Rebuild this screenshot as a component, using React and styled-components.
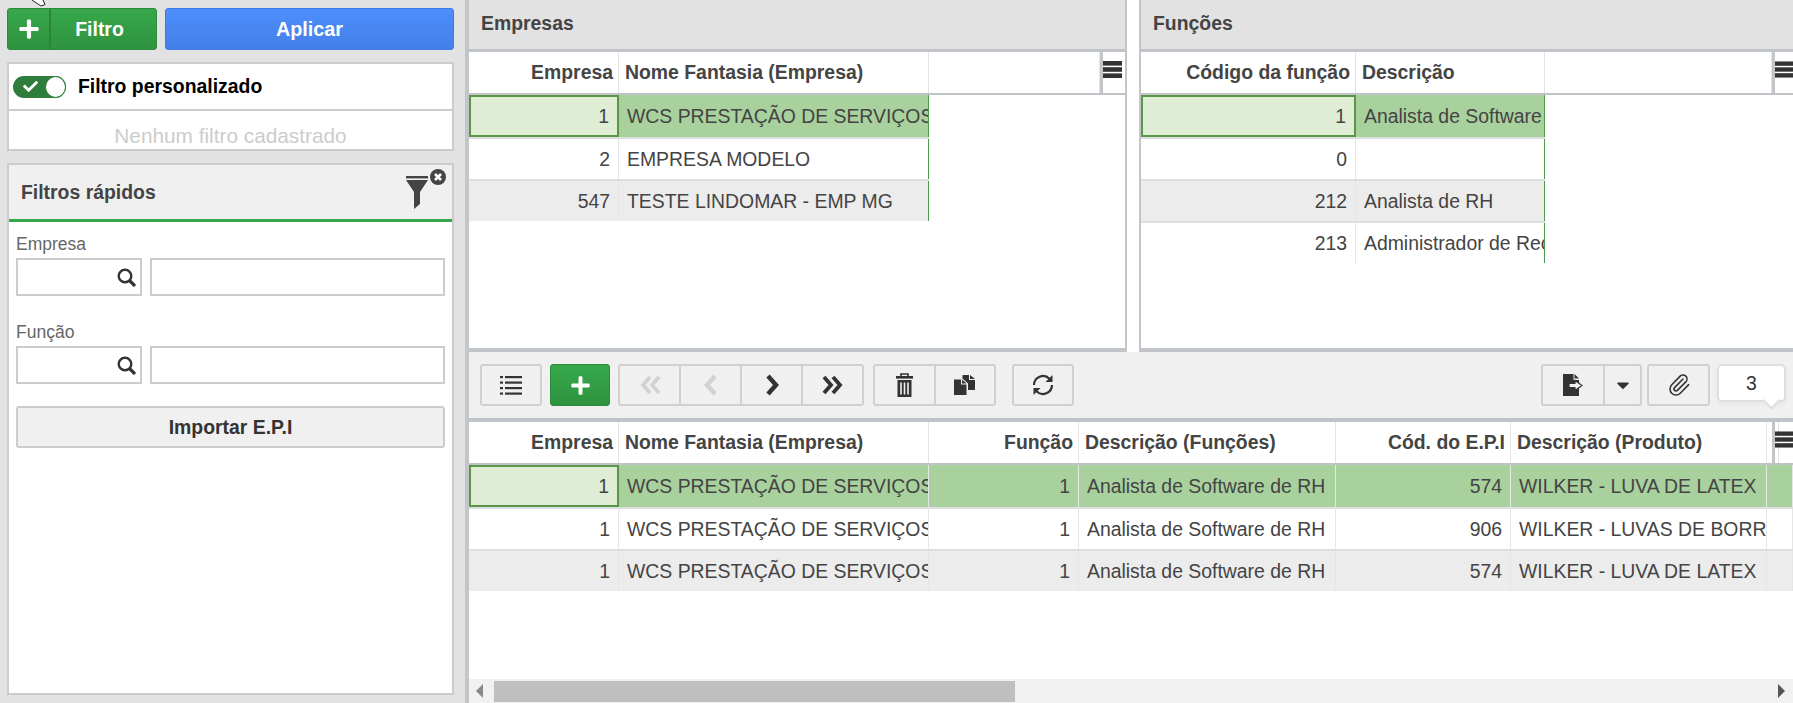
import React from 'react';
import styled, { createGlobalStyle } from 'styled-components';
import { FaCaretDown, FaCheck, FaPlus } from 'react-icons/fa';
import { Paperclip } from 'lucide-react';

const GlobalStyle = createGlobalStyle`
  html, body {
    margin: 0;
    padding: 0;
    overflow: hidden;
    font-family: "Liberation Sans", Arial, sans-serif;
  }
  * {
    box-sizing: border-box;
  }
`;

const Page = styled.div`
  position: relative;
  display: flex;
  width: 1793px;
  height: 703px;
  overflow: hidden;
  background: #e2e2e2;
`;

const Cursor = styled.svg`
  position: absolute;
  left: 32px;
  top: 0;
`;

const Sidebar = styled.aside`
  display: flex;
  flex-direction: column;
  width: 465px;
  flex-shrink: 0;
  padding: 8px 11px 8px 7px;
`;

const ActionRow = styled.div`
  display: flex;
  gap: 8px;
  height: 42px;
`;

const FilterButton = styled.button`
  display: flex;
  align-items: stretch;
  width: 150px;
  padding: 0;
  color: #fff;
  font: bold 19.4px "Liberation Sans", Arial, sans-serif;
  background: linear-gradient(#37a84b, #2f933f);
  border: 1px solid #2b8a3b;
  border-radius: 3px;
`;

const FilterIcon = styled.span`
  display: flex;
  align-items: center;
  justify-content: center;
  width: 43px;
  font-size: 22px;
  border-right: 2px solid #2a8439;
`;

const FilterLabel = styled.span`
  flex: 1;
  align-self: center;
  padding-right: 8px;
  text-align: center;
`;

const ApplyButton = styled.button`
  flex: 1;
  color: #fff;
  font: bold 19.8px "Liberation Sans", Arial, sans-serif;
  background: linear-gradient(#4d8ffc, #447fe9);
  border: 1px solid #3c7ae4;
  border-radius: 3px;
`;

const CustomFilter = styled.div`
  display: flex;
  flex-direction: column;
  margin-top: 12px;
  height: 89px;
  background: #fff;
  border: 2px solid #ccc;
`;

const ToggleRow = styled.div`
  display: flex;
  align-items: center;
  gap: 12px;
  height: 47px;
  padding-left: 4px;
  font-size: 19.4px;
  font-weight: bold;
  color: #000;
  border-bottom: 2px solid #ccc;
`;

const Toggle = styled.span`
  display: flex;
  align-items: center;
  justify-content: space-between;
  width: 53px;
  height: 22px;
  padding-left: 10px;
  color: #fff;
  font-size: 15px;
  background: #2e7d3c;
  border-radius: 11px;
`;

const Knob = styled.span`
  width: 21px;
  height: 22px;
  background: #fff;
  border: 1px solid #2e7d3c;
  border-radius: 50%;
`;

const EmptyFilter = styled.div`
  flex: 1;
  display: flex;
  align-items: center;
  justify-content: center;
  padding-top: 11px;
  font-size: 20.8px;
  color: #ccc;
`;

const QuickPanel = styled.section`
  flex: 1;
  margin-top: 12px;
  background: #fff;
  border: 2px solid #ccc;
`;

const QuickHeader = styled.header`
  display: flex;
  align-items: center;
  justify-content: space-between;
  height: 57px;
  padding: 0 5px 0 12px;
  font-size: 19.4px;
  font-weight: bold;
  color: #444;
  background: #f0f0f0;
  border-bottom: 3px solid #36a64a;

  svg {
    align-self: flex-start;
    margin-top: 3px;
  }
`;

const QuickBody = styled.div`
  display: flex;
  flex-direction: column;
  padding: 12px 7px;
`;

const FieldLabel = styled.label`
  height: 24px;
  font-size: 17.5px;
  line-height: 20px;
  color: #666;
`;

const FieldRow = styled.div`
  display: flex;
  gap: 8px;
  height: 38px;
  margin-bottom: 26px;
`;

const CodeInput = styled.div`
  display: flex;
  align-items: center;
  justify-content: flex-end;
  width: 126px;
  padding-right: 4px;
  background: #fff;
  border: 2px solid #ccc;
`;

const NameInput = styled.div`
  flex: 1;
  background: #fff;
  border: 2px solid #ccc;
`;

const ImportButton = styled.button`
  height: 42px;
  margin-top: -4px;
  font: bold 19.4px "Liberation Sans", Arial, sans-serif;
  color: #333;
  background: #f0f0f0;
  border: 2px solid #ccc;
  border-radius: 3px;
`;

const Main = styled.main`
  flex: 1;
  display: flex;
  flex-direction: column;
  min-width: 0;
  background: #f0f0f0;
  border-left: 4px solid #c3c6c9;
`;

const TopRow = styled.div`
  display: flex;
  justify-content: space-between;
  height: 352px;
  background: #fff;
`;

const Panel = styled.section`
  display: flex;
  flex-direction: column;
  width: ${(p) => p.$width}px;
  background: #fff;
  border-left: ${(p) => (p.$divided ? '2px solid #c3c6c9' : 'none')};
  border-right: ${(p) => (p.$divided ? 'none' : '2px solid #c3c6c9')};
  border-bottom: 4px solid #c0c4c8;
`;

const PanelTitle = styled.h2`
  display: flex;
  align-items: center;
  flex-shrink: 0;
  height: 52px;
  margin: 0;
  padding: 0 0 2px 12px;
  font-size: 19.4px;
  font-weight: bold;
  color: #444;
  background: #e2e2e2;
  border-bottom: 3px solid #c0c4c8;
`;

const GridWrap = styled.div`
  flex: 1;
  min-height: 0;
  background: #fff;
`;

const GridHeader = styled.div`
  display: grid;
  grid-template-columns: ${(p) => p.$columns};
  height: 43px;
  background: #fff;
  border-bottom: 2px solid #c0c4c8;
`;

const HeaderCell = styled.div`
  display: flex;
  align-items: center;
  justify-content: ${(p) => (p.$right ? 'flex-end' : 'flex-start')};
  padding: 0 5px 0 6px;
  overflow: hidden;
  white-space: nowrap;
  font-size: 19.4px;
  font-weight: bold;
  color: #444;
  border-right: 1px solid #e3e3e3;
`;

const MenuCell = styled.div`
  display: flex;
  align-items: center;
  padding-bottom: 6px;
  overflow: hidden;
  border-left: 3px solid #c3c6c9;
`;

const GridRow = styled.div`
  display: grid;
  grid-template-columns: ${(p) => p.$columns};
  height: 42px;
  width: ${(p) => p.$width};
  background: ${(p) => (p.$selected ? '#a9d19e' : p.$striped ? '#ececec' : '#fff')};
  border-top: ${(p) => (p.$first ? 'none' : '2px solid #dcdfdf')};
`;

const Cell = styled.div`
  display: flex;
  align-items: center;
  justify-content: ${(p) => (p.$right ? 'flex-end' : 'flex-start')};
  padding: ${(p) => (p.$right ? '0 8px 0 0' : '0 0 0 8px')};
  overflow: hidden;
  white-space: nowrap;
  font-size: 19.4px;
  color: #444;
  background: ${(p) => (p.$active ? '#deedd4' : 'transparent')};
  border: ${(p) => (p.$active ? '2px solid #5a9648' : 'none')};
  border-right: ${(p) =>
    p.$active ? '2px solid #5a9648' : p.$edge ? '1px solid #4f9a4f' : '1px solid #e6e6e6'};
`;

const Toolbar = styled.div`
  display: flex;
  align-items: flex-start;
  flex-shrink: 0;
  height: 70px;
  padding: 12px 7px 0 11px;
  border-bottom: 4px solid #c0c4c8;
`;

const ToolGroup = styled.div`
  display: flex;
  height: 42px;
  margin-right: ${(p) => p.$gap}px;
  background: #f0f0f0;
  border: 2px solid #d0d0d0;
  border-radius: 3px;
`;

const ToolButton = styled.button`
  display: flex;
  align-items: center;
  justify-content: center;
  width: ${(p) => p.$width || 59}px;
  padding: 0;
  font-size: ${(p) => p.$size || 20}px;
  color: #333;
  background: transparent;
  border: none;
  border-left: ${(p) => (p.$split ? '2px solid #d0d0d0' : 'none')};
`;

const AddButton = styled.button`
  display: flex;
  align-items: center;
  justify-content: center;
  width: 60px;
  height: 42px;
  margin-right: 8px;
  padding: 0;
  font-size: 21px;
  color: #fff;
  background: linear-gradient(#37a84b, #2f933f);
  border: 1px solid #2b8a3b;
  border-radius: 3px;
`;

const Counter = styled.div`
  position: relative;
  display: flex;
  align-items: center;
  justify-content: center;
  width: 69px;
  height: 38px;
  margin-left: 7px;
  font-size: 19.4px;
  color: #333;
  background: #fff;
  border: 2px solid #dedede;
  border-radius: 5px;
  box-shadow: 0 3px 4px rgba(0, 0, 0, 0.04);

  &::after {
    content: '';
    position: absolute;
    left: 46px;
    bottom: -7px;
    width: 11px;
    height: 11px;
    background: #fff;
    border-right: 2px solid #dedede;
    border-bottom: 2px solid #dedede;
    transform: rotate(45deg);
  }
`;

const BottomGrid = styled.div`
  flex: 1;
  min-height: 0;
  display: flex;
  flex-direction: column;
  background: #fff;
`;

const Rows = styled.div`
  flex: 1;
`;

const ScrollBar = styled.div`
  display: flex;
  align-items: center;
  justify-content: space-between;
  height: 24px;
  padding: 0 8px 0 7px;
  background: #f1f1f1;
`;

const ScrollThumb = styled.div`
  width: 521px;
  height: 21px;
  margin-left: 10px;
  background: #bfbfbf;
`;

const Spacer = styled.div`
  flex: 1;
`;

const MenuIcon = () => (
  <svg width="19" height="17" viewBox="0 0 19 17" fill="#333">
    <rect y="0" width="19" height="4.6" />
    <rect y="6.2" width="19" height="4.6" />
    <rect y="12.4" width="19" height="4.6" />
  </svg>
);

const SearchIcon = () => (
  <svg width="19" height="19" viewBox="0 0 19 19" fill="none" stroke="#333">
    <circle cx="8" cy="8" r="6.3" strokeWidth="2.4" />
    <path d="M12.5 12.5L18 18" strokeWidth="3.2" />
  </svg>
);

const ListIcon = () => (
  <svg width="22" height="19" viewBox="0 0 22 19" fill="#333">
    {[0, 5.5, 11, 16.5].map((y) => (
      <g key={y}>
        <rect y={y} width="3" height="2.2" />
        <rect x="5" y={y} width="17" height="2.2" />
      </g>
    ))}
  </svg>
);

const Chevron = ({ flip, disabled }) => (
  <svg
    width="14"
    height="22"
    viewBox="0 0 14 22"
    fill="none"
    stroke={disabled ? '#d2d2d2' : '#333'}
    strokeWidth="4.5"
    transform={flip ? 'scale(-1 1)' : undefined}
  >
    <path d="M3 2l8 9-8 9" />
  </svg>
);

const DoubleChevron = ({ flip, disabled }) => (
  <svg
    width="22"
    height="20"
    viewBox="0 0 22 20"
    fill="none"
    stroke={disabled ? '#d2d2d2' : '#333'}
    strokeWidth="3.8"
    transform={flip ? 'scale(-1 1)' : undefined}
  >
    <path d="M2 2l7 8-7 8M11 2l7 8-7 8" />
  </svg>
);

const TrashIcon = () => (
  <svg width="17" height="24" viewBox="0 0 17 24">
    <path d="M5 3.5V1h7v2.500" fill="none" stroke="#333" strokeWidth="1.6" />
    <rect y="3" width="17" height="2.6" fill="#333" />
    <rect x="1.5" y="7" width="14" height="17" fill="#333" />
    <rect x="4.2" y="9.5" width="1.6" height="12" fill="#f0f0f0" />
    <rect x="7.7" y="9.5" width="1.6" height="12" fill="#f0f0f0" />
    <rect x="11.2" y="9.5" width="1.6" height="12" fill="#f0f0f0" />
  </svg>
);

const FilesIcon = () => (
  <svg width="22" height="20" viewBox="0 0 22 20" fill="#333">
    <path d="M8.5 0H15V5h6V15H14V8.5L9 4H8.5z" />
    <path d="M16 0l5 4h-5z" />
    <path d="M0 4.5H7V9.5h5.5V20H0z" />
    <path d="M8 4.5l4.5 4H8z" />
  </svg>
);

const RefreshIcon = () => (
  <svg width="22" height="22" viewBox="0 0 22 22">
    <path d="M2 11A9 9 0 0 1 17.5 4.8M20 11A9 9 0 0 1 4.5 17.2" fill="none" stroke="#333" strokeWidth="2.2" />
    <path d="M20.5 1V8H13.5zM1.5 21V14H8.5z" fill="#333" />
  </svg>
);

const ExportIcon = () => (
  <svg width="20" height="22" viewBox="0 0 20 22">
    <path d="M0 0H10.5V6H16V22H0z" fill="#333" />
    <path d="M11.5 0L16 4.5H11.5z" fill="#333" />
    <path d="M6 9.5H12V6.5L19 11.5 12 16.5V13.5H6z" fill="#f0f0f0" stroke="#333" strokeWidth="1.2" />
  </svg>
);

const FunnelIcon = () => (
  <svg width="41" height="44" viewBox="0 0 41 44">
    <rect y="8" width="22" height="2.4" fill="#444" />
    <path d="M0 12h22l-8 12v12l-6 5V24z" fill="#444" />
    <circle cx="32" cy="9" r="8" fill="#444" />
    <path d="M29 6l6 6M35 6l-6 6" stroke="#fff" strokeWidth="2.6" />
  </svg>
);

const empresaColumns = '150px 310px 171px 1fr';
const funcaoColumns = '215px 189px 227px 1fr';
const bottomColumns = '150px 310px 150px 256.5px 175.5px 256px 5px 1fr';

const Grid = ({ columns, header, rowWidth, rowColumns, rows, edge }) => (
  <>
    <GridHeader $columns={columns}>
      {header.map((h, i) => (
        <HeaderCell key={i} $right={h.right}>
          {h.label}
        </HeaderCell>
      ))}
      <MenuCell>
        <MenuIcon />
      </MenuCell>
    </GridHeader>
    {rows.map((row, r) => (
      <GridRow
        key={r}
        $columns={rowColumns}
        $width={rowWidth}
        $first={r === 0}
        $selected={r === 0}
        $striped={r % 2 === 0}
      >
        {row.map((text, c) => (
          <Cell
            key={c}
            $right={header[c].right}
            $active={r === 0 && c === 0}
            $edge={edge && c === row.length - 1}
          >
            {text}
          </Cell>
        ))}
      </GridRow>
    ))}
  </>
);

const WCS = 'WCS PRESTAÇÃO DE SERVIÇOS LTDA';
const ANALISTA = 'Analista de Software de RH';

const App = () => (
  <Page>
    <GlobalStyle />
    <Sidebar>
      <ActionRow>
        <FilterButton>
          <FilterIcon>
            <FaPlus />
          </FilterIcon>
          <FilterLabel>Filtro</FilterLabel>
        </FilterButton>
        <ApplyButton>Aplicar</ApplyButton>
      </ActionRow>

      <CustomFilter>
        <ToggleRow>
          <Toggle>
            <FaCheck />
            <Knob />
          </Toggle>
          Filtro personalizado
        </ToggleRow>
        <EmptyFilter>Nenhum filtro cadastrado</EmptyFilter>
      </CustomFilter>

      <QuickPanel>
        <QuickHeader>
          Filtros rápidos
          <FunnelIcon />
        </QuickHeader>
        <QuickBody>
          <FieldLabel>Empresa</FieldLabel>
          <FieldRow>
            <CodeInput>
              <SearchIcon />
            </CodeInput>
            <NameInput />
          </FieldRow>
          <FieldLabel>Função</FieldLabel>
          <FieldRow>
            <CodeInput>
              <SearchIcon />
            </CodeInput>
            <NameInput />
          </FieldRow>
          <ImportButton>Importar E.P.I</ImportButton>
        </QuickBody>
      </QuickPanel>
    </Sidebar>

    <Main>
      <TopRow>
        <Panel $width={658}>
          <PanelTitle>Empresas</PanelTitle>
          <GridWrap>
            <Grid
              columns={empresaColumns}
              rowColumns="150px 310px"
              rowWidth="460px"
              edge
              header={[
                { label: 'Empresa', right: true },
                { label: 'Nome Fantasia (Empresa)' },
                { label: '' },
              ]}
              rows={[
                ['1', WCS],
                ['2', 'EMPRESA MODELO'],
                ['547', 'TESTE LINDOMAR - EMP MG'],
              ]}
            />
          </GridWrap>
        </Panel>
        <Panel $width={654} $divided>
          <PanelTitle>Funções</PanelTitle>
          <GridWrap>
            <Grid
              columns={funcaoColumns}
              rowColumns="215px 189px"
              rowWidth="404px"
              edge
              header={[
                { label: 'Código da função', right: true },
                { label: 'Descrição' },
                { label: '' },
              ]}
              rows={[
                ['1', ANALISTA],
                ['0', ''],
                ['212', 'Analista de RH'],
                ['213', 'Administrador de Recursos Humanos'],
              ]}
            />
          </GridWrap>
        </Panel>
      </TopRow>

      <Toolbar>
        <ToolGroup $gap={8}>
          <ToolButton $width={58}>
            <ListIcon />
          </ToolButton>
        </ToolGroup>
        <AddButton>
          <FaPlus />
        </AddButton>
        <ToolGroup $gap={9}>
          <ToolButton>
            <DoubleChevron flip disabled />
          </ToolButton>
          <ToolButton $width={61} $split>
            <Chevron flip disabled />
          </ToolButton>
          <ToolButton $width={61} $split>
            <Chevron />
          </ToolButton>
          <ToolButton $width={61} $split>
            <DoubleChevron />
          </ToolButton>
        </ToolGroup>
        <ToolGroup $gap={16}>
          <ToolButton>
            <TrashIcon />
          </ToolButton>
          <ToolButton $width={60} $split>
            <FilesIcon />
          </ToolButton>
        </ToolGroup>
        <ToolGroup $gap={0}>
          <ToolButton $width={58}>
            <RefreshIcon />
          </ToolButton>
        </ToolGroup>
        <Spacer />
        <ToolGroup $gap={5}>
          <ToolButton $width={60}>
            <ExportIcon />
          </ToolButton>
          <ToolButton $width={37} $size={20} $split>
            <FaCaretDown />
          </ToolButton>
        </ToolGroup>
        <ToolGroup $gap={0}>
          <ToolButton $width={59}>
            <Paperclip size={24} strokeWidth={1.6} />
          </ToolButton>
        </ToolGroup>
        <Counter>3</Counter>
      </Toolbar>

      <BottomGrid>
        <Rows>
          <Grid
            columns={bottomColumns}
            rowColumns="150px 310px 150px 256.5px 175.5px 256px 1fr"
            rowWidth="100%"
            header={[
              { label: 'Empresa', right: true },
              { label: 'Nome Fantasia (Empresa)' },
              { label: 'Função', right: true },
              { label: 'Descrição (Funções)' },
              { label: 'Cód. do E.P.I', right: true },
              { label: 'Descrição (Produto)' },
              { label: '' },
            ]}
            rows={[
              ['1', WCS, '1', ANALISTA, '574', 'WILKER - LUVA DE LATEX', ''],
              ['1', WCS, '1', ANALISTA, '906', 'WILKER - LUVAS DE BORRACHA', ''],
              ['1', WCS, '1', ANALISTA, '574', 'WILKER - LUVA DE LATEX', ''],
            ]}
          />
        </Rows>
        <ScrollBar>
          <svg width="8" height="14" viewBox="0 0 8 14" fill="#888">
            <path d="M7 0v14L0 7z" />
          </svg>
          <ScrollThumb />
          <Spacer />
          <svg width="8" height="14" viewBox="0 0 8 14" fill="#555">
            <path d="M1 0v14l7-7z" />
          </svg>
        </ScrollBar>
      </BottomGrid>
    </Main>

    <Cursor width="15" height="7" viewBox="0 0 15 7">
      <path d="M0 0l9 6 4-1.5L11 0" fill="#fff" stroke="#222" strokeWidth="1" />
    </Cursor>
  </Page>
);

export default App;
